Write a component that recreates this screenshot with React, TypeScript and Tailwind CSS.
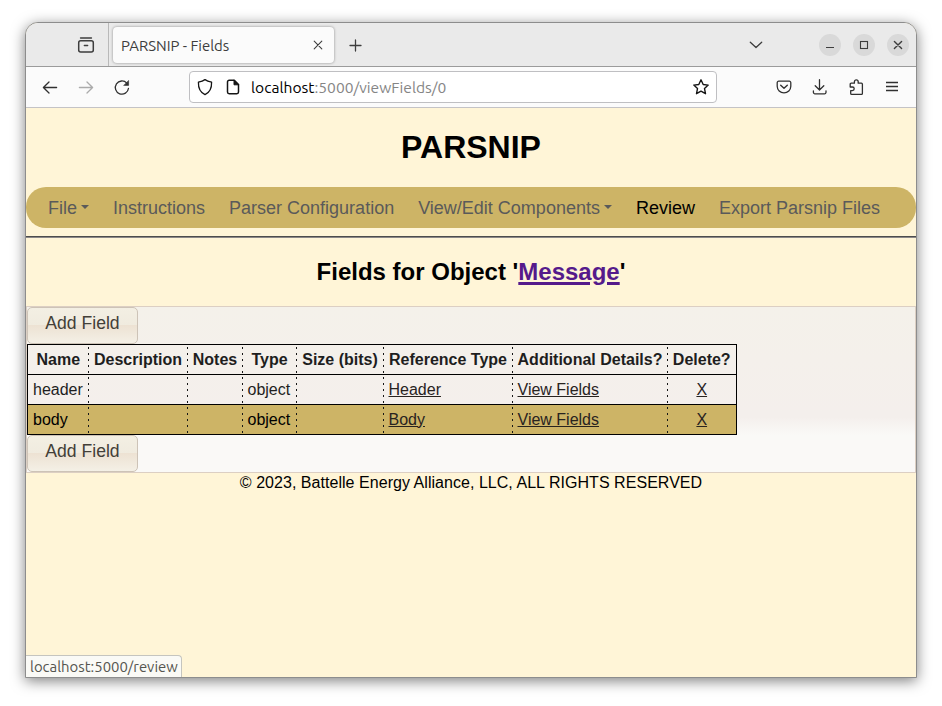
import type { ReactNode } from "react";

const uiFont = "font-['Ubuntu','Noto_Sans',sans-serif]";

function Icon({ children, size = 18, className = "" }: { children: ReactNode; size?: number; className?: string }) {
  return (
    <svg
      width={size}
      height={size}
      viewBox="0 0 18 18"
      fill="none"
      stroke="currentColor"
      strokeWidth="1.3"
      strokeLinecap="round"
      strokeLinejoin="round"
      className={`shrink-0 ${className}`}
    >
      {children}
    </svg>
  );
}

function TabBar() {
  return (
    <div className="flex h-[44px] items-center border-b border-[#9b9b9b] bg-[#eaeaea] text-[#3d3d3d]">
      <div className="flex h-full w-[83px] items-center justify-end border-r border-[#b9b9b9] pr-[13px]">
        <Icon>
          <path d="M3.500 2h11" />
          <rect x="1.700" y="4.800" width="14.600" height="11.200" rx="2" strokeWidth="1.500" />
          <path d="M7.300 9.500h3.400" />
        </Icon>
      </div>
      <div className="ml-[4px] flex h-[36px] w-[221px] items-center justify-between rounded bg-[#fbfbfb] pr-[7px] pl-2 shadow-[0_0_3px_rgba(0,0,0,0.4)]">
        <span className={`${uiFont} w-[112px] pt-[4px] text-[14.9px] whitespace-nowrap`}>PARSNIP - Fields</span>
        <Icon>
          <path d="M5.200 5.200l7.600 7.600M12.800 5.200l-7.600 7.600" strokeWidth="1.100" />
        </Icon>
      </div>
      <Icon className="ml-[12px]">
        <path d="M9.500 4v11M4 9.500h11" />
      </Icon>
      <div className="flex-1" />
      <Icon className="mr-[54px]">
        <path d="M3.300 6.300L9 11.600l5.700-5.300" />
      </Icon>
      <div className="mr-[7px] flex gap-3">
        <div className="flex size-[22px] items-center justify-center rounded-full bg-[#d9d9d9]">
          <Icon><path d="M5 11.500h8" strokeLinecap="butt" strokeWidth="1" /></Icon>
        </div>
        <div className="flex size-[22px] items-center justify-center rounded-full bg-[#d9d9d9]">
          <Icon><rect x="5.500" y="5.500" width="7" height="7" strokeLinejoin="miter" strokeWidth="1.100" /></Icon>
        </div>
        <div className="flex size-[22px] items-center justify-center rounded-full bg-[#d9d9d9]">
          <Icon><path d="M5.400 5.400l7.200 7.200M12.600 5.400l-7.200 7.200" strokeWidth="1.400" /></Icon>
        </div>
      </div>
    </div>
  );
}

function Toolbar() {
  return (
    <div className="flex h-[41px] items-center border-b border-[#c4c3c6] bg-[#fbfbfb] text-[#303030]">
      <Icon className="ml-[15px]">
        <path d="M15.600 9.500H2.400M8 4L2.400 9.500 8 15" />
      </Icon>
      <Icon className="ml-[18px] text-[#ababab]">
        <path d="M2.400 9.500h13.200M10 4l5.600 5.500L10 15" />
      </Icon>
      <Icon className="ml-[18px]">
        <path d="M15.500 10.300A6.600 6.600 0 1 1 13.800 5.100" />
        <path d="M15.600 2.800v4.600H11z" fill="currentColor" strokeWidth="0.600" />
      </Icon>
      <div className="ml-[58px] flex h-[32px] w-[528px] items-center rounded border border-[#bfbfc2] bg-white pl-[6px] text-[#151515]">
        <Icon>
          <path d="M9 1.600c1.800 1.300 4 2 6.600 2.500.2 6-2 10.500-6.600 12.600C4.400 14.600 2.200 10.100 2.400 4.100 5 3.600 7.200 2.900 9 1.600z" />
        </Icon>
        <Icon className="ml-[10px]">
          <path d="M10.300 2.300H5.200a1.700 1.700 0 0 0-1.700 1.700v10a1.700 1.700 0 0 0 1.700 1.700h7.600a1.700 1.700 0 0 0 1.700-1.700V6.500z" strokeWidth="1.500" />
          <path d="M10 2.300v4.500h4.500z" fill="currentColor" strokeWidth="1" />
        </Icon>
        <span className={`${uiFont} ml-[9px] pt-px text-[15.6px] whitespace-nowrap text-[#858585]`}>
          <span className="text-black">localhost</span>:5000/viewFields/0
        </span>
        <Icon className="mr-[6px] ml-auto">
          <path d="M9 1.800l2.200 4.700 5 .6-3.700 3.500 1 5.100L9 13.200l-4.500 2.500 1-5.100L1.800 7.100l5-.6z" strokeWidth="1.400" />
        </Icon>
      </div>
      <Icon className="ml-[58px]">
        <path d="M3.700 3.200h10.600a1.500 1.500 0 0 1 1.500 1.500V8.300a6.800 6.600 0 0 1-13.600 0V4.700a1.500 1.500 0 0 1 1.500-1.500z" />
        <path d="M5.700 7.200L9 10.300l3.300-3.100" strokeWidth="1.400" />
      </Icon>
      <Icon className="ml-[18px]">
        <path d="M8.500 1.700v10M4.200 7.700L8.500 12l4.300-4.300M2.400 12.800v1.500a1.500 1.500 0 0 0 1.500 1.500h9.600a1.500 1.500 0 0 0 1.500-1.500v-1.500" />
      </Icon>
      <Icon className="ml-[18px]">
        <path d="M4.200 5.200h3.200V3.800a1.900 1.900 0 0 1 3.800 0v1.400h3.200a1 1 0 0 1 1 1v9.200a1 1 0 0 1-1 1H4.700a1 1 0 0 1-1-1v-2.800h1.700a1.800 1.800 0 0 0 0-3.600H3.200V6.200a1 1 0 0 1 1-1z" />
      </Icon>
      <Icon className="ml-[18px]">
        <path d="M3 4.500h12M3 8.500h12M3 12.500h12" strokeLinecap="butt" />
      </Icon>
    </div>
  );
}

function Caret() {
  return <span className="mt-[-3px] ml-[4px] h-0 w-0 border-x-4 border-t-4 border-x-transparent border-t-current" />;
}

const navItems = [
  { label: "File", menu: true },
  { label: "Instructions" },
  { label: "Parser Configuration" },
  { label: "View/Edit Components", menu: true },
  { label: "Review", active: true },
  { label: "Export Parsnip Files" },
];

function NavBar() {
  return (
    <nav className="flex h-[41px] items-center gap-6 rounded-[20px] bg-[#cdb466] pt-[2px] pl-[22px] text-[18px] text-[#5a5a5a]">
      {navItems.map((item) => (
        <a key={item.label} className={`flex items-center whitespace-nowrap ${item.active ? "text-black" : ""}`}>
          {item.label}
          {item.menu && <Caret />}
        </a>
      ))}
    </nav>
  );
}

function AddButton() {
  return (
    <button className="block h-[37px] w-[111px] rounded-[5px] border border-[#cdc3b7] bg-[linear-gradient(#f3efe3_0%,#f0ebdf_49%,#ede2d3_50%,#f4f0e6_100%)] pb-[4px] text-[17.6px] leading-[31px] text-[#433f38]">
      Add Field
    </button>
  );
}

const columns = [
  { title: "Name", width: "w-[61px]" },
  { title: "Description", width: "w-[99px]" },
  { title: "Notes", width: "w-[55px]" },
  { title: "Type", width: "w-[54px]" },
  { title: "Size (bits)", width: "w-[87px]" },
  { title: "Reference Type", width: "w-[129px]" },
  { title: "Additional Details?", width: "w-[155px]" },
  { title: "Delete?", width: "w-[69px]" },
];

const rows = [
  { name: "header", type: "object", reference: "Header" },
  { name: "body", type: "object", reference: "Body" },
];

// Sparse dots along the right edge of every column but the last.
const cell =
  "p-0 bg-[repeating-linear-gradient(to_bottom,transparent_0px,transparent_2px,#161616_2px,#161616_4px,transparent_4px,transparent_6px)] bg-[length:1px_100%] bg-right bg-no-repeat last:bg-none";

function FieldTable() {
  return (
    <table className="w-[710px] table-fixed border-collapse border border-black text-[16px] text-[#1e1e1e]">
      <colgroup>
        {columns.map((c) => (
          <col key={c.title} className={c.width} />
        ))}
      </colgroup>
      <thead>
        <tr className="h-[30px] border-b border-black">
          {columns.map((c) => (
            <th key={c.title} className={`${cell} text-center font-bold whitespace-nowrap`}>{c.title}</th>
          ))}
        </tr>
      </thead>
      <tbody>
        {rows.map((r) => (
          <tr key={r.name} className="h-[30px] border-b border-black even:bg-[#cdb466] even:text-black">
            <td className={`${cell} pl-[5px]`}>{r.name}</td>
            <td className={cell} />
            <td className={cell} />
            <td className={`${cell} pl-[5px]`}>{r.type}</td>
            <td className={cell} />
            <td className={`${cell} pl-[5px]`}><a className="text-[#28231f] underline">{r.reference}</a></td>
            <td className={`${cell} pl-[5px]`}><a className="text-[#28231f] underline">View Fields</a></td>
            <td className={`${cell} text-center`}><a className="text-[#28231f] underline">X</a></td>
          </tr>
        ))}
      </tbody>
    </table>
  );
}

export default function App() {
  return (
    <div className="h-[706px] w-[942px] overflow-hidden bg-white pt-[22px] pl-[25px] font-['Liberation_Sans',Arial,sans-serif]">
      <div className="relative flex h-[656px] w-[892px] flex-col overflow-visible rounded-t-[13px] border border-[#8d8d8d] bg-[#fff5d7] shadow-[0_3px_14px_rgba(0,0,0,0.5)]">
        <div className="overflow-hidden rounded-t-[12px]">
          <TabBar />
          <Toolbar />
        </div>
        <main className="text-black">
          <h1 className="pt-[21px] text-center text-[32px] leading-[37px] font-bold">PARSNIP</h1>
          <div className="pt-[21px]"><NavBar /></div>
          <hr className="mt-2 h-[2px] border-t border-b border-t-[#4c4c4c] border-b-[#8c8888]" />
          <h2 className="pt-[20px] text-center text-[24px] leading-[28px] font-bold">
            Fields for Object '<a className="text-[#551a8b] underline decoration-[3px] underline-offset-2">Message</a>'
          </h2>
          <section className="mt-[20px] h-[167px] border border-[#dccfc3] bg-[linear-gradient(#f4f1ea_0px,#f4efec_105px,#f4efec_110px,#faf9f7_128px,#faf9f7_100%)]">
            <AddButton />
            <FieldTable />
            <AddButton />
          </section>
          <footer className="pt-px text-center text-[16px] leading-[18px] tracking-[0.04px]">
            © 2023, Battelle Energy Alliance, LLC, ALL RIGHTS RESERVED
          </footer>
        </main>
        <div className={`${uiFont} absolute bottom-0 left-0 h-[22px] w-[156px] rounded-tr border-t border-r border-[#c5c5bf] bg-[#fafaf6] pl-[4px] text-[14.9px] leading-[22px] whitespace-nowrap text-[#55554f]`}>
          localhost:5000/review
        </div>
      </div>
    </div>
  );
}
